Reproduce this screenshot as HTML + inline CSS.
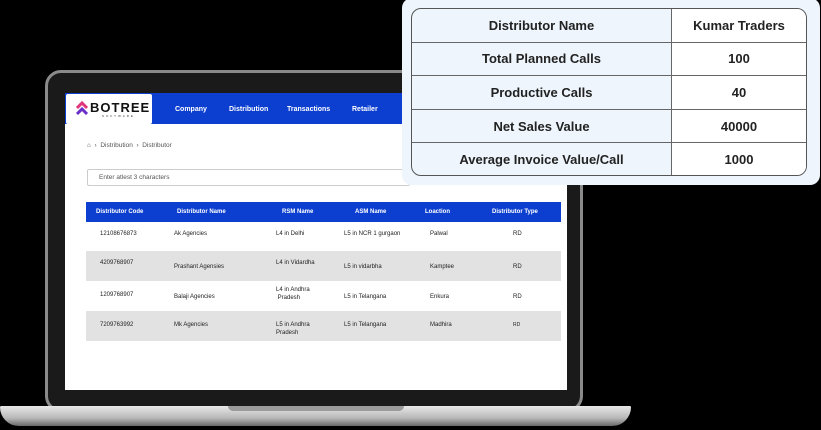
<!DOCTYPE html>
<html><head><style>
*{margin:0;padding:0;box-sizing:border-box}
body{width:821px;height:430px;background:#000;position:relative;overflow:hidden;font-family:"Liberation Sans",sans-serif}
.abs{position:absolute}
.bezel{left:45px;top:70px;width:538px;height:342px;border-radius:16px;background:#1a1a1a;border:3px solid #8a8a8a}
.screen{left:65px;top:93px;width:502px;height:297px;background:#fff}
.base{left:0;top:406px;width:631px;height:20px;background:linear-gradient(#e8e8e8,#b8b8b8 60%,#6a6a6a);border-radius:2px 2px 30px 30px}
.notch{left:228px;top:406px;width:176px;height:5px;background:#9a9a9a;border-radius:0 0 5px 5px}
.nav{left:65px;top:93px;width:345px;height:31px;background:#0c3fd0}
.logo{left:66px;top:94px;width:86px;height:30px;background:#fff;border-radius:2px}
.nav span{position:absolute;top:13px;color:#fff;font-size:7px;font-weight:bold}
.crumb{font-size:6.5px;color:#555}
.search{left:87px;top:169px;width:323px;height:17px;border:1px solid #ccc;border-radius:2px;font-size:6.5px;color:#555;padding:4px 11px}
.th{left:86px;top:202px;width:475px;height:20px;background:#0c3fd0}
.th span{position:absolute;top:7px;color:#fff;font-size:6px;font-weight:bold}
.row{left:86px;width:475px;height:30px}
.row span{position:absolute;top:8px;font-size:6px;color:#222;line-height:8px}
.card{left:402px;top:-2px;width:418px;height:187px;background:#eef5fc;border-radius:10px}
table{position:absolute;left:411px;top:8px;width:396px;height:168px;border-collapse:separate;border-spacing:0;border:1px solid #555;border-radius:10px;overflow:hidden;font-size:13px;font-weight:bold;color:#222;text-align:center}
td{border-bottom:1px solid #666}
tr:last-child td{border-bottom:none}
td:first-child{border-right:1px solid #666;width:260px}
td:last-child{background:#fff}
</style></head><body>
<div class="abs bezel"></div>
<div class="abs screen"></div>
<div class="abs base"></div><div class="abs notch"></div>
<div class="abs nav">
<span style="left:110px">Company</span><span style="left:164px">Distribution</span><span style="left:222px">Transactions</span><span style="left:287px">Retailer</span>
</div>
<div class="abs logo">
<svg class="abs" style="left:9px;top:6px" width="14" height="17" viewBox="0 0 14 17"><path d="M2 8 L7 3 L12 8" stroke="#e0357a" stroke-width="3" fill="none"/><path d="M2 14 L7 9 L12 14" stroke="#6a2fc9" stroke-width="3" fill="none"/></svg>
<span class="abs" style="left:24px;top:6px;font-size:13px;font-weight:bold;letter-spacing:1px;color:#111">BOTREE</span>
<span class="abs" style="left:36px;top:20px;font-size:3px;letter-spacing:2px;color:#333">SOFTWARE</span>
</div>
<div class="abs crumb" style="left:87px;top:142px">⌂ &nbsp;›&nbsp; Distribution &nbsp;›&nbsp; Distributor</div>
<div class="abs search">Enter atlest 3 characters</div>
<div class="abs th"><span style="left:10px">Distributor Code</span><span style="left:91px">Distributor Name</span><span style="left:196px">RSM Name</span><span style="left:269px">ASM Name</span><span style="left:339px">Loaction</span><span style="left:406px">Distributor Type</span></div>
<div class="abs row" style="top:222px"><span style="left:14px">12108676873</span><span style="left:88px">Ak Agencies</span><span style="left:190px">L4 in Delhi</span><span style="left:258px">L5 in NCR 1 gurgaon</span><span style="left:344px">Palwal</span><span style="left:427px">RD</span></div>
<div class="abs row" style="top:251px;background:#e2e2e2"><span style="left:14px">4209768907</span><span style="left:88px;top:12px">Prashant Agensies</span><span style="left:190px">L4 in Vidardha</span><span style="left:258px;top:12px">L5 in vidarbha</span><span style="left:344px;top:12px">Kamptee</span><span style="left:427px;top:12px">RD</span></div>
<div class="abs row" style="top:281px"><span style="left:14px;top:10px">1209768907</span><span style="left:88px;top:12px">Balaji Agencies</span><span style="left:190px;top:5px">L4 in Andhra<br>&nbsp;Pradesh</span><span style="left:258px;top:12px">L5 in Telangana</span><span style="left:344px;top:12px">Enkura</span><span style="left:427px;top:12px">RD</span></div>
<div class="abs row" style="top:311px;background:#e2e2e2"><span style="left:14px;top:10px">7209763992</span><span style="left:88px;top:10px">Mk Agencies</span><span style="left:190px;top:10px">L5 in Andhra<br>Pradesh</span><span style="left:258px;top:10px">L5 in Telangana</span><span style="left:344px;top:10px">Madhira</span><span style="left:427px;top:10px;font-size:5px">RD</span></div>
<div class="abs card"></div>
<table>
<tr><td>Distributor Name</td><td>Kumar Traders</td></tr>
<tr><td>Total Planned Calls</td><td>100</td></tr>
<tr><td>Productive Calls</td><td>40</td></tr>
<tr><td>Net Sales Value</td><td>40000</td></tr>
<tr><td>Average Invoice Value/Call</td><td>1000</td></tr>
</table>
</body></html>
